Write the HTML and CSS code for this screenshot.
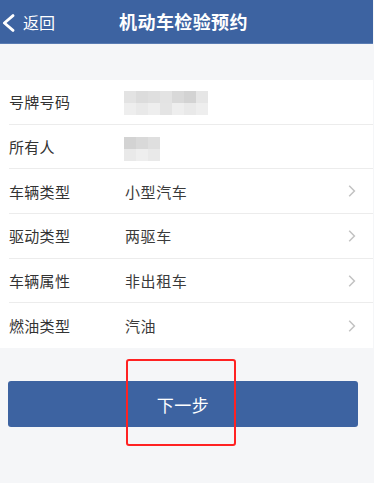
FILE: index.html
```html
<!DOCTYPE html>
<html lang="zh-CN">
<head>
<meta charset="utf-8">
<title>机动车检验预约</title>
<link rel="stylesheet" href="styles.css">
</head>
<body>
<div class="page">
  <header class="topbar">
    <div class="back">
      <svg class="back-icon" width="13" height="18" viewBox="0 0 13 18"><path d="M11 1.6 L2.4 9 L11 16.4" fill="none" stroke="#fff" stroke-width="2.8" stroke-linecap="round" stroke-linejoin="round"/></svg>
      <span class="back-text">返回</span>
    </div>
    <h1 class="title">机动车检验预约</h1>
    <div></div>
  </header>
  <div class="spacer"></div>
  <ul class="list">
    <li class="row">
      <span class="label">号牌号码</span>
      <span class="value"><span class="mosaic mosaic-wide"><i class="a"></i><i class="b"></i><i class="c"></i><i class="a"></i><i class="d"></i><i class="e"></i><i class="f"></i><i class="g"></i><i class="h"></i><i class="g"></i><i class="i"></i><i class="g"></i><i class="h"></i><i class="g"></i></span></span>
    </li>
    <li class="row">
      <span class="label">所有人</span>
      <span class="value"><span class="mosaic mosaic-narrow"><i class="e"></i><i class="d"></i><i class="c"></i><i class="h"></i><i class="g"></i><i class="h"></i></span></span>
    </li>
    <li class="row">
      <span class="label">车辆类型</span>
      <span class="value">小型汽车</span>
      <svg class="arrow" width="8" height="12" viewBox="0 0 8 12"><path d="M1.2 0.8 L6.4 6 L1.2 11.2" fill="none" stroke="#c2c2c2" stroke-width="1.5"/></svg>
    </li>
    <li class="row">
      <span class="label">驱动类型</span>
      <span class="value">两驱车</span>
      <svg class="arrow" width="8" height="12" viewBox="0 0 8 12"><path d="M1.2 0.8 L6.4 6 L1.2 11.2" fill="none" stroke="#c2c2c2" stroke-width="1.5"/></svg>
    </li>
    <li class="row">
      <span class="label">车辆属性</span>
      <span class="value">非出租车</span>
      <svg class="arrow" width="8" height="12" viewBox="0 0 8 12"><path d="M1.2 0.8 L6.4 6 L1.2 11.2" fill="none" stroke="#c2c2c2" stroke-width="1.5"/></svg>
    </li>
    <li class="row last">
      <span class="label">燃油类型</span>
      <span class="value">汽油</span>
      <svg class="arrow" width="8" height="12" viewBox="0 0 8 12"><path d="M1.2 0.8 L6.4 6 L1.2 11.2" fill="none" stroke="#c2c2c2" stroke-width="1.5"/></svg>
    </li>
  </ul>
  <div class="actions">
    <button class="next" type="button">下一步</button>
    <div class="highlight"></div>
  </div>
</div>
</body>
</html>
```
FILE: styles.css
```css
* { box-sizing: border-box; }
html, body {
  margin: 0;
  padding: 0;
  background: #f5f6f8;
  font-family: "Noto Sans CJK SC", "Noto Sans", sans-serif;
}
.page {
  width: 373px;
  min-height: 483px;
  background: #f5f6f8;
}
.topbar {
  height: 44px;
  background: #3d63a1;
  display: grid;
  grid-template-columns: 1fr auto 1fr;
  align-items: center;
  color: #fff;
  border-bottom: 1px solid #5a7cb3;
}
.back {
  display: flex;
  align-items: center;
  padding-left: 2px;
}
.back-icon { display: block; margin-top: 2px; }
.back-text {
  font-size: 16px;
  margin-left: 8px;
  line-height: 1;
}
.title {
  margin: 0;
  font-size: 18px;
  font-weight: 700;
  letter-spacing: 0.4px;
  line-height: 1;
  padding-right: 6px;
  margin-top: -1px;
}
.spacer { height: 36px; }
.list {
  list-style: none;
  margin: 0;
  padding: 0 0 0 9px;
  background: #fff;
}
.row {
  position: relative;
  height: 44.7px;
  display: flex;
  align-items: center;
  border-bottom: 1px solid #ececec;
  font-size: 15px;
  color: #333;
}
.row.last { border-bottom: none; }
.label {
  width: 116px;
  flex: none;
  letter-spacing: 0.3px;
}
.value {
  flex: 1;
  color: #3a3a3a;
  letter-spacing: 0.6px;
  display: flex;
  align-items: center;
}
.arrow {
  flex: none;
  margin-right: 17px;
}
.mosaic {
  display: grid;
  grid-auto-rows: 12px;
  margin-left: -1px;
}
.mosaic-wide {
  grid-template-columns: repeat(7, 12px);
  margin-top: 3px;
}
.mosaic-narrow {
  grid-template-columns: repeat(3, 12px);
  margin-top: 5px;
}
.mosaic i { display: block; }
.mosaic .a { background: #e3e3e3; }
.mosaic .b { background: #dcdcdc; }
.mosaic .c { background: #dfdfdf; }
.mosaic .d { background: #d9d9d9; }
.mosaic .e { background: #d3d3d3; }
.mosaic .f { background: #e6e6e6; }
.mosaic .g { background: #eeeeee; }
.mosaic .h { background: #e9e9e9; }
.mosaic .i { background: #e4e4e4; }
.actions {
  position: relative;
  padding: 33px 15px 0 8px;
}
.next {
  display: block;
  width: 100%;
  height: 46px;
  border: none;
  border-radius: 3px;
  background: #3d63a1;
  color: #fff;
  font-family: inherit;
  font-size: 17px;
  letter-spacing: 0.5px;
  padding: 0;
}
.highlight {
  position: absolute;
  left: 126px;
  top: 11px;
  width: 110px;
  height: 87px;
  border: 2.5px solid #ff2222;
  border-radius: 3px;
}
```
